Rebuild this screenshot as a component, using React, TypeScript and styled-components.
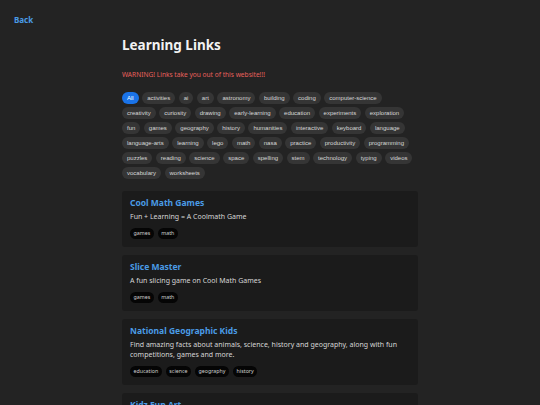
import React, { useState } from "react";
import styled, { createGlobalStyle } from "styled-components";

interface ILink {
  title: string;
  description: string;
  tags: string[];
}

const categories = [
  "All", "activities", "ai", "art", "astronomy", "building", "coding", "computer-science",
  "creativity", "curiosity", "drawing", "early-learning", "education", "experiments", "exploration",
  "fun", "games", "geography", "history", "humanities", "interactive", "keyboard", "language",
  "language-arts", "learning", "lego", "math", "nasa", "practice", "productivity", "programming",
  "puzzles", "reading", "science", "space", "spelling", "stem", "technology", "typing", "videos",
  "vocabulary", "worksheets",
];

const links: ILink[] = [
  {
    title: "Cool Math Games",
    description: "Fun + Learning = A Coolmath Game",
    tags: ["games", "math"],
  },
  {
    title: "Slice Master",
    description: "A fun slicing game on Cool Math Games",
    tags: ["games", "math"],
  },
  {
    title: "National Geographic Kids",
    description:
      "Find amazing facts about animals, science, history and geography, along with fun competitions, games and more.",
    tags: ["education", "science", "geography", "history"],
  },
  {
    title: "Kidz Fun Art",
    description: "Free drawing lessons and coloring pages for kids.",
    tags: ["art", "drawing"],
  },
];

const GlobalStyle = createGlobalStyle`
  html, body {
    margin: 0;
    padding: 0;
    background: #232323;
    font-family: "Noto Sans", "Open Sans", sans-serif;
    color: #e6e6e6;
  }
`;

const App = () => {
  const [active, setActive] = useState("All");

  const shown =
    active === "All" ? links : links.filter((l) => l.tags.includes(active));

  return (
    <Page>
      <GlobalStyle />
      <BackLink href="#">Back</BackLink>
      <Main>
        <Title>Learning Links</Title>
        <Warning>WARNING! Links take you out of this website!!!</Warning>
        <FilterList>
          {categories.map((c) => (
            <Chip key={c} $active={c === active} onClick={() => setActive(c)}>
              {c}
            </Chip>
          ))}
        </FilterList>
        <CardList>
          {shown.map((link) => (
            <Card key={link.title}>
              <CardTitle href="#">{link.title}</CardTitle>
              <CardText>{link.description}</CardText>
              <TagRow>
                {link.tags.map((t) => (
                  <Tag key={t}>{t}</Tag>
                ))}
              </TagRow>
            </Card>
          ))}
        </CardList>
      </Main>
    </Page>
  );
};

const Page = styled.div`
  position: relative;
  height: 405px;
  overflow: hidden;
  padding-top: 26px;
  box-sizing: border-box;
`;

const BackLink = styled.a`
  position: absolute;
  left: 14px;
  top: 14px;
  font-size: 8px;
  font-weight: 700;
  color: #4a9be6;
  text-decoration: none;
`;

const Main = styled.main`
  width: 296px;
  margin: 0 auto;
  display: flex;
  flex-direction: column;
`;

const Title = styled.h1`
  margin: 9px 0 0;
  font-size: 13.5px;
  line-height: 20px;
  font-weight: 700;
  color: #f2f2f2;
`;

const Warning = styled.p`
  margin: 15px 0 0;
  font-size: 6.6px;
  line-height: 10px;
  color: #e8605c;
`;

const FilterList = styled.div`
  display: flex;
  flex-wrap: wrap;
  gap: 3px 3.5px;
  margin-top: 12px;
`;

const Chip = styled.button<{ $active: boolean }>`
  height: 12px;
  padding: 0 5px;
  border: none;
  border-radius: 6px;
  background: ${(p) => (p.$active ? "#1a73e8" : "#353535")};
  color: ${(p) => (p.$active ? "#ffffff" : "#d8d8d8")};
  font-family: "Liberation Sans", Arial, sans-serif;
  font-size: 6px;
  line-height: 12px;
  cursor: pointer;
`;

const CardList = styled.div`
  display: flex;
  flex-direction: column;
  gap: 8px;
  margin-top: 12px;
`;

const Card = styled.div`
  background: #1b1b1b;
  border-radius: 3px;
  padding: 6px 8px 8px;
`;

const CardTitle = styled.a`
  display: block;
  font-size: 8.5px;
  line-height: 12px;
  font-weight: 700;
  color: #4a9be6;
  text-decoration: none;
`;

const CardText = styled.p`
  margin: 3px 0 0;
  font-size: 7px;
  line-height: 10px;
  color: #d6d6d6;
`;

const TagRow = styled.div`
  display: flex;
  flex-wrap: wrap;
  gap: 4px;
  margin-top: 6px;
`;

const Tag = styled.span`
  height: 11px;
  padding: 0 3.5px;
  border-radius: 6px;
  background: #050505;
  color: #cfcfcf;
  font-size: 5.3px;
  line-height: 11px;
`;

export default App;
